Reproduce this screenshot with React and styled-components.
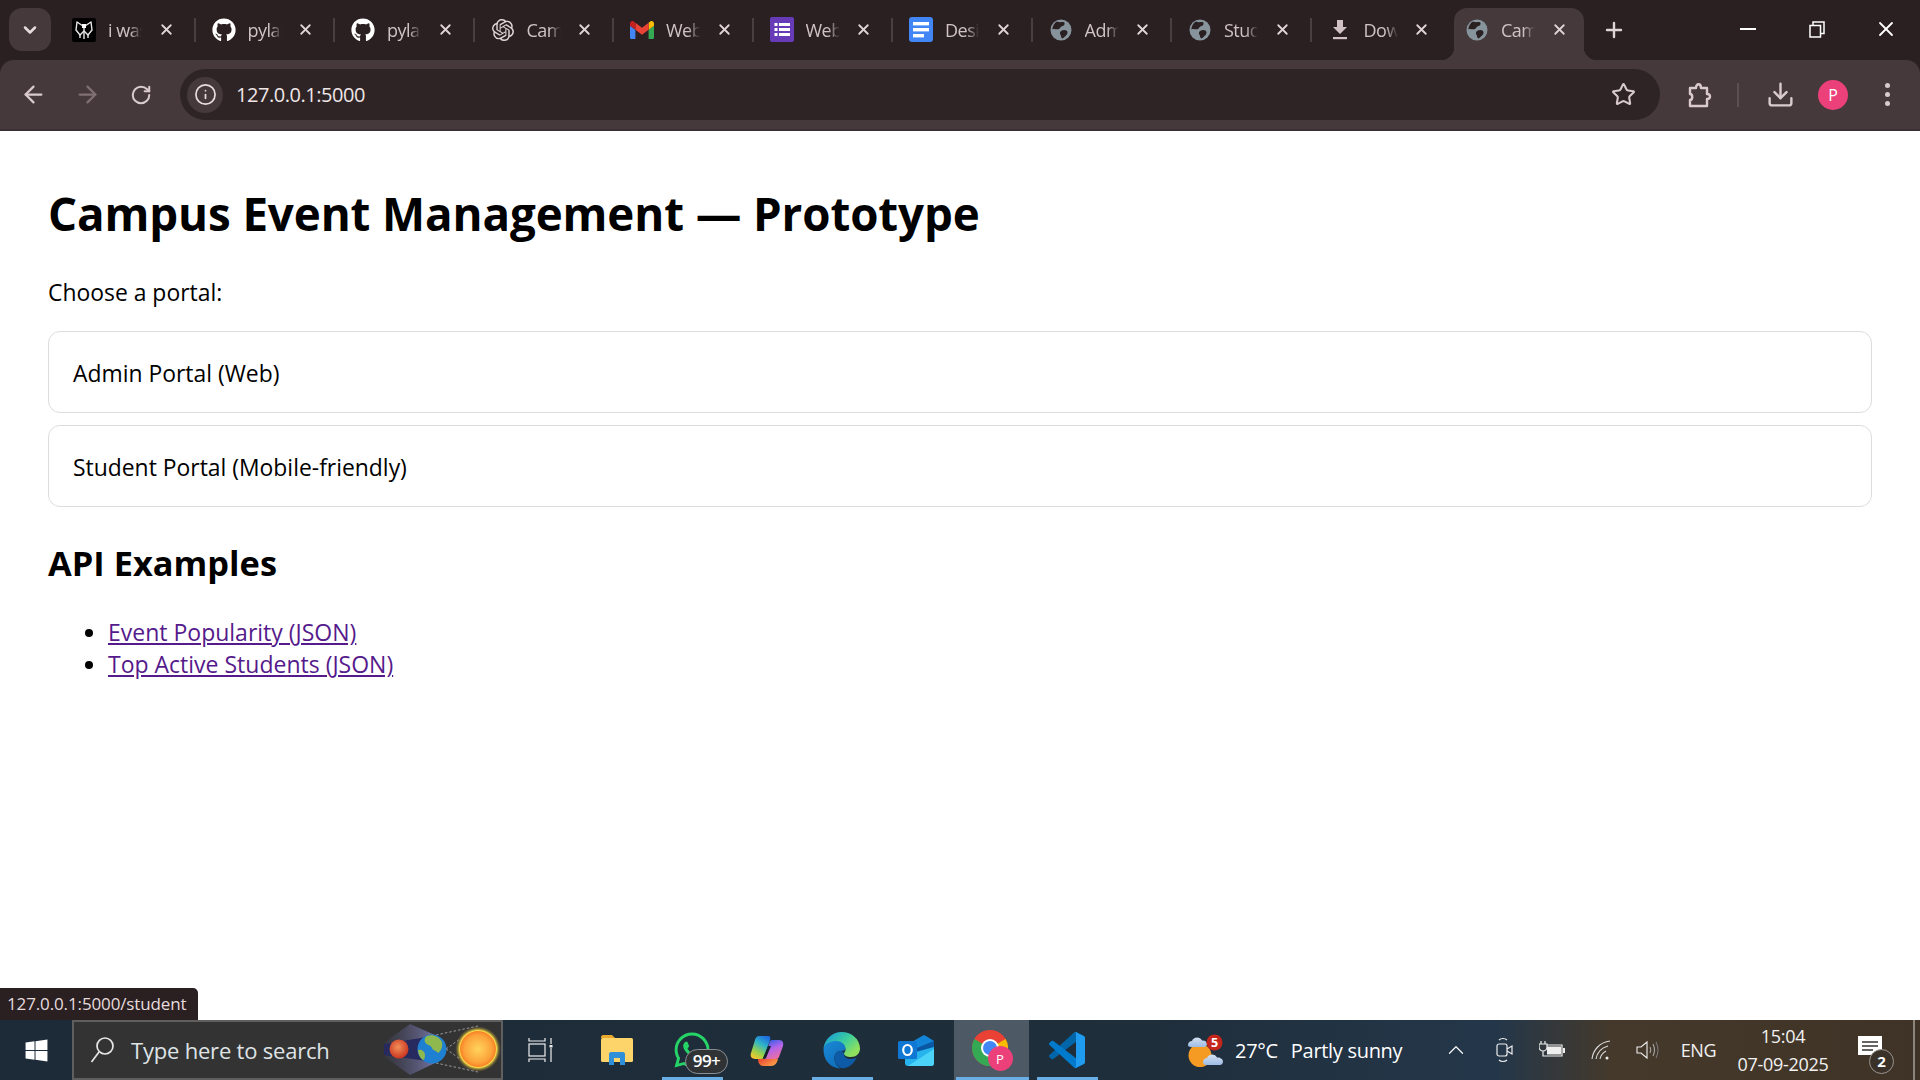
import React from 'react';
import styled, { createGlobalStyle } from 'styled-components';
import { ArrowLeft, ArrowRight, RotateCw, Info, Star, Download, X, Plus, ChevronDown, ChevronUp } from 'lucide-react';
import { FaGithub, FaWindows, FaWhatsapp } from 'react-icons/fa';
import { SiOpenai } from 'react-icons/si';

const FONT = '"Open Sans", "Noto Sans", sans-serif';

const GlobalStyle = createGlobalStyle`
  html, body { margin: 0; padding: 0; background: #fff; }
  body { font-family: ${FONT}; overflow: hidden; }
  #root { height: 100vh; }
`;

const Screen = styled.div`
  width: 1920px;
  height: 1080px;
  display: flex;
  flex-direction: column;
  position: relative;
  overflow: hidden;
`;

/* browser chrome */
const TabStrip = styled.div`
  height: 60px;
  flex: none;
  background: #2a1f21;
  display: flex;
  align-items: flex-start;
  padding-top: 8px;
  box-sizing: border-box;
`;

const TabListButton = styled.div`
  width: 42px;
  height: 43px;
  margin-left: 9px;
  margin-right: 5px;
  flex: none;
  border-radius: 13px;
  background: #46393c;
  color: #e6dcdd;
  display: flex;
  align-items: center;
  justify-content: center;
`;

const Tab = styled.div`
  width: 139.5px;
  height: 52px;
  flex: none;
  margin-left: ${p => (p.$active ? -2 : 0)}px;
  position: relative;
  display: flex;
  align-items: flex-start;
  padding: 9px 0 0 16px;
  box-sizing: border-box;
  color: #d1c3c5;
  &::after {
    content: '';
    display: ${p => (p.$last ? 'none' : 'block')};
    position: absolute;
    right: 0;
    top: 10px;
    width: 2px;
    height: 24px;
    background: #4a3e41;
  }
`;

const ActiveShape = styled.div`
  position: absolute;
  left: 5px;
  right: 5px;
  top: 0;
  bottom: 0;
  background: #46393c;
  border-radius: 13px 13px 0 0;
  &::before, &::after {
    content: '';
    position: absolute;
    bottom: 0;
    width: 13px;
    height: 13px;
  }
  &::before { left: -13px; background: radial-gradient(circle at 0 0, #2a1f21 13px, #46393c 13.5px); }
  &::after { right: -13px; background: radial-gradient(circle at 100% 0, #2a1f21 13px, #46393c 13.5px); }
`;

const TabIcon = styled.div`
  width: 24px;
  height: 25px;
  flex: none;
  position: relative;
  display: flex;
  align-items: center;
  justify-content: center;
`;

const TabTitle = styled.div`
  width: 34px;
  margin-left: 12px;
  flex: none;
  position: relative;
  overflow: hidden;
  white-space: nowrap;
  font-size: 18px;
  line-height: 27px;
  letter-spacing: -0.5px;
  color: #d1c3c5;
  -webkit-mask-image: linear-gradient(90deg, #000 65%, transparent 100%);
  mask-image: linear-gradient(90deg, #000 65%, transparent 100%);
`;

const TabClose = styled.div`
  width: 20px;
  height: 25px;
  margin-left: 14px;
  flex: none;
  position: relative;
  display: flex;
  align-items: center;
  justify-content: center;
  color: #e0d4d6;
`;

const NewTab = styled.div`
  width: 30px;
  height: 44px;
  margin-left: 10px;
  flex: none;
  display: flex;
  align-items: center;
  justify-content: center;
  color: #e0d4d6;
`;

const WindowControls = styled.div`
  margin-left: auto;
  margin-top: -8px;
  display: flex;
  flex: none;
`;

const WindowButton = styled.div`
  width: 69px;
  height: 58px;
  display: flex;
  align-items: center;
  justify-content: center;
  color: #fff;
`;

const ToolbarWrap = styled.div`
  background: #2a1f21;
  flex: none;
`;

const Toolbar = styled.div`
  height: 69px;
  background: #46393c;
  border-radius: 14px 14px 0 0;
  border-bottom: 2px solid #3a2f32;
  display: flex;
  align-items: center;
`;

const NavButton = styled.div`
  width: 54px;
  height: 54px;
  flex: none;
  margin-left: ${p => p.$ml || 0}px;
  display: flex;
  align-items: center;
  justify-content: center;
  color: ${p => p.$dim ? '#7f7073' : '#d9cbcd'};
`;

const Omnibox = styled.div`
  width: 1480px;
  height: 51px;
  margin-left: 12px;
  flex: none;
  background: #2e2325;
  border-radius: 26px;
  display: flex;
  align-items: center;
  padding: 0 7px;
  box-sizing: border-box;
`;

const SiteInfo = styled.div`
  width: 36px;
  height: 36px;
  flex: none;
  border-radius: 50%;
  background: #46393c;
  color: #e6dcdd;
  display: flex;
  align-items: center;
  justify-content: center;
`;

const Url = styled.div`
  margin-left: 13px;
  font-size: 20px;
  letter-spacing: -0.46px;
  color: #eee6e7;
  flex: 1;
`;

const StarButton = styled.div`
  width: 30px;
  margin-right: 15px;
  display: flex;
  justify-content: center;
  color: #d9cbcd;
`;

const ToolbarDivider = styled.div`
  width: 2px;
  height: 24px;
  background: #5c4f52;
  flex: none;
  margin: 0 14px 0 10px;
`;

const Avatar = styled.div`
  width: ${p => p.$size || 30}px;
  height: ${p => p.$size || 30}px;
  flex: none;
  margin-left: ${p => p.$ml || 0}px;
  border-radius: 50%;
  background: #ec407a;
  color: #fff;
  font-size: ${p => p.$fs || 16}px;
  display: flex;
  align-items: center;
  justify-content: center;
`;

const MenuDots = styled.div`
  width: 5px;
  margin-left: 37px;
  flex: none;
  display: flex;
  flex-direction: column;
  gap: 4px;
  span {
    width: 5px;
    height: 5px;
    border-radius: 50%;
    background: #d9cbcd;
  }
`;

/* page */
const Page = styled.main`
  flex: 1;
  min-height: 0;
  background: #fff;
  color: #000;
  padding: 0 48px;
`;

const Title = styled.h1`
  margin: 0;
  padding-top: 49px;
  font-size: 45.7px;
  line-height: 66px;
  font-weight: 700;
  letter-spacing: -0.1px;
`;

const Lead = styled.p`
  margin: 31px 0 0;
  font-size: 22.9px;
  line-height: 32px;
`;

const Card = styled.div`
  height: 82px;
  box-sizing: border-box;
  margin-top: ${p => p.$mt}px;
  padding: 2px 24px 0;
  border: 1px solid #ddd;
  border-radius: 12px;
  display: flex;
  align-items: center;
  font-size: 22.9px;
`;

const Subtitle = styled.h2`
  margin: 34px 0 0;
  font-size: 34.4px;
  line-height: 44px;
  font-weight: 700;
`;

const LinkList = styled.ul`
  margin: 31px 0 0;
  padding: 0 0 0 60px;
  font-size: 23px;
  line-height: 32px;
  a { color: #551a8b; text-decoration: underline; }
`;

const StatusBubble = styled.div`
  position: absolute;
  left: 0;
  bottom: 60px;
  width: 198px;
  height: 32px;
  box-sizing: border-box;
  padding-left: 7px;
  background: #2a1f21;
  border-radius: 0 5px 0 0;
  color: #e6dcdd;
  font-size: 17px;
  letter-spacing: -0.13px;
  line-height: 32px;
  white-space: nowrap;
`;

/* taskbar */
const Taskbar = styled.footer`
  height: 60px;
  flex: none;
  display: flex;
  align-items: stretch;
  color: #fff;
  background: linear-gradient(90deg, #1d2b38 0%, #1f2e3b 60%, #24374a 78%, #45392b 84%, #3f3327 100%);
`;

const StartButton = styled.div`
  width: 72px;
  flex: none;
  display: flex;
  align-items: center;
  justify-content: center;
`;

const SearchBox = styled.div`
  width: 431px;
  flex: none;
  box-sizing: border-box;
  background: #333;
  border: 2px solid #5f5f5f;
  display: flex;
  align-items: center;
  position: relative;
  overflow: hidden;
`;

const SearchGlassWrap = styled.div`
  margin-left: 16px;
  display: flex;
`;

const SearchLabel = styled.span`
  margin-left: 15px;
  font-size: 22px;
  letter-spacing: -0.2px;
  color: #dfe3e6;
`;

const ArtSvg = styled.svg`
  position: absolute;
  right: -3px;
  top: 0;
`;

const TaskSlot = styled.div`
  width: ${p => p.$w || 75}px;
  flex: none;
  position: relative;
  display: flex;
  align-items: center;
  justify-content: center;
  background: ${p => p.$active ? '#4d5a66' : 'transparent'};
  &::after {
    content: '';
    display: ${p => p.$open ? 'block' : 'none'};
    position: absolute;
    left: ${p => p.$active ? 2 : 8}px;
    right: ${p => p.$active ? 0 : 6}px;
    bottom: 0;
    height: 3px;
    background: #6aaee6;
  }
`;

const WaBadge = styled.div`
  position: absolute;
  left: 31px;
  top: 29px;
  width: 43px;
  height: 25px;
  box-sizing: border-box;
  border: 1px solid #8a8f94;
  border-radius: 13px;
  background: #2f3336;
  color: #fff;
  font-size: 17px;
  font-weight: 600;
  line-height: 22px;
  text-align: center;
  letter-spacing: -0.5px;
`;

const Weather = styled.div`
  width: 326px;
  flex: none;
  box-sizing: border-box;
  padding-left: 83px;
  display: flex;
  align-items: center;
  font-size: 20px;
  white-space: nowrap;
  letter-spacing: -0.3px;
  span { margin-left: 12px; }
  span:last-of-type { margin-left: 13px; }
  svg { flex: none; }
`;

const TraySlot = styled.div`
  width: ${p => p.$w}px;
  flex: none;
  position: relative;
  display: flex;
  flex-direction: column;
  align-items: center;
  justify-content: center;
  font-size: 18px;
  letter-spacing: -0.3px;
  color: #f2f2f2;
`;

const ClockLine = styled.div`
  line-height: 28px;
`;

const NotifyBadge = styled.div`
  position: absolute;
  left: 30px;
  top: 29px;
  width: 25px;
  height: 25px;
  box-sizing: border-box;
  border: 1.5px solid #9a958e;
  border-radius: 50%;
  background: #3a3128;
  color: #fff;
  font-size: 15px;
  font-weight: 700;
  line-height: 22px;
  text-align: center;
`;

const DesktopPeek = styled.div`
  width: 2px;
  margin-left: 12px;
  flex: none;
  background: #8c857c;
`;

const ChromeWrap = styled.div`
  position: relative;
  width: 40px;
  height: 40px;
  svg { display: block; }
`;

const AvatarBadge = styled(Avatar)`
  position: absolute;
  right: -1px;
  bottom: -1px;
`;

/* drawn icons */
const MothIcon = () => (
  <svg width="24" height="24" viewBox="0 0 24 24">
    <rect width="24" height="24" rx="2" fill="#000" />
    <g stroke="#e8e8e8" strokeWidth="1.4" fill="none" strokeLinejoin="round">
      <path d="M12 6v15" />
      <path d="M11 8 5 4 4 12l4 5 4-4" />
      <path d="M13 8l6-4 1 8-4 5-4-4" />
      <path d="M8 17v3M16 17v3" />
    </g>
    <rect x="10" y="6" width="4" height="4" fill="#fff" />
  </svg>
);

const GmailIcon = () => (
  <svg width="24" height="20" viewBox="0 0 24 18">
    <path d="M1.6 18h3.8V8.8L0 4.8v11.6C0 17.3.7 18 1.6 18z" fill="#4285f4" />
    <path d="M18.6 18h3.8c.9 0 1.6-.7 1.6-1.6V4.8l-5.4 4z" fill="#34a853" />
    <path d="M18.6 1.8v7L24 4.8V2.4C24 .4 21.7-.7 20.2.5z" fill="#fbbc04" />
    <path d="M5.4 8.8v-7L12 6.7l6.6-4.9v7L12 13.7z" fill="#ea4335" />
    <path d="M0 2.4v2.4l5.4 4v-7L3.8.5C2.3-.7 0 .4 0 2.4z" fill="#c5221f" />
  </svg>
);

const FormsIcon = () => (
  <svg width="24" height="25" viewBox="0 0 24 25">
    <rect width="24" height="25" rx="2" fill="#673ab7" />
    <g fill="#fff">
      <rect x="4.5" y="6" width="3" height="3" />
      <rect x="4.5" y="11" width="3" height="3" />
      <rect x="4.5" y="16" width="3" height="3" />
      <rect x="9" y="6" width="11" height="3" />
      <rect x="9" y="11" width="11" height="3" />
      <rect x="9" y="16" width="11" height="3" />
    </g>
  </svg>
);

const DocsIcon = () => (
  <svg width="24" height="25" viewBox="0 0 24 25">
    <rect width="24" height="25" rx="3" fill="#4285f4" />
    <g fill="#fff">
      <rect x="4" y="5" width="16" height="3.4" />
      <rect x="4" y="11" width="16" height="3.4" />
      <rect x="4" y="17" width="11" height="3.4" />
    </g>
  </svg>
);

const GlobeIcon = () => (
  <svg width="22" height="22" viewBox="0 0 22 22">
    <circle cx="11" cy="11" r="10.5" fill="#87949c" />
    <path d="M7 2.6c2 1 5 .2 7 .6 1.5 1.5 0 3.7-2 4-2 .5-1.500 2.400-3.500 3-2 .5-4.200-.7-6.200.2C2.600 7.300 4.300 4 7 2.600z" fill="#2a1f21" />
    <path d="M11 12c2-1.300 4.500-1.300 6 0 1 1 .5 3.200-1 4.500-1.200 1-2.300 2.600-3.700 2.900-1.500-.8-.8-2.800-2-4-.6-1.200-.4-2.600.7-3.400z" fill="#2a1f21" />
  </svg>
);

const DownloadTabIcon = () => (
  <svg width="16" height="22" viewBox="0 0 16 22">
    <path d="M5 1h6v7h4l-7 7-7-7h4z" fill="#d1c3c5" />
    <rect x="1" y="18" width="14" height="2.200" fill="#d1c3c5" />
  </svg>
);

const PuzzleIcon = () => (
  <svg width="26" height="28" viewBox="0 0 26 28" fill="none" stroke="#d9cbcd" strokeWidth="2.400" strokeLinejoin="round">
    <path d="M3 7h6c0-5 5-5 5 0h6v6c4 0 4 5 0 5v7H3v-6c3 0 3-6 0-6z" />
  </svg>
);

const RestoreIcon = () => (
  <svg width="16" height="17" viewBox="0 0 16 17" fill="none" stroke="#fff" strokeWidth="1.500">
    <rect x="1" y="4.500" width="10.500" height="11.500" />
    <path d="M4 4.500V1h11v11.500h-3.500" />
  </svg>
);

const MinimizeIcon = () => (
  <svg width="16" height="3" viewBox="0 0 16 3"><rect width="16" height="2" fill="#fff" /></svg>
);

const SearchGlass = () => (
  <svg width="26" height="28" viewBox="0 0 26 28" fill="none" stroke="#e6e6e6" strokeWidth="1.700">
    <circle cx="15" cy="10" r="8" />
    <path d="M9 16 1.500 26" />
  </svg>
);

const EclipseArt = () => (
  <ArtSvg width="124" height="56" viewBox="0 0 124 56">
    <defs>
      <radialGradient id="sun" cx="50%" cy="50%" r="50%">
        <stop offset="0%" stopColor="#ffd45e" />
        <stop offset="60%" stopColor="#fca33a" />
        <stop offset="76%" stopColor="#f9852a" />
        <stop offset="80%" stopColor="#fde047" />
        <stop offset="100%" stopColor="#6a5a2c" stopOpacity="0" />
      </radialGradient>
      <radialGradient id="mars" cx="45%" cy="40%" r="60%">
        <stop offset="0%" stopColor="#f2905a" />
        <stop offset="100%" stopColor="#c9341f" />
      </radialGradient>
      <linearGradient id="haze" x1="0" y1="0" x2="1" y2="0">
        <stop offset="0%" stopColor="#4a4a72" stopOpacity="0.2" />
        <stop offset="100%" stopColor="#8080b6" stopOpacity="0.85" />
      </linearGradient>
    </defs>
    <path d="M5 20 30 2 55 13v28L30 53 5 35z" fill="url(#haze)" />
    <path d="M4 22 47 15v24L4 33z" fill="#262a5e" />
    <path d="M56 13 98 4M56 41l42 9M66 27l14-10M66 27l14 10" stroke="#9a9aa2" strokeWidth="1" strokeDasharray="2.500 2" fill="none" />
    <circle cx="19" cy="27" r="9.500" fill="url(#mars)" />
    <circle cx="52" cy="27" r="14.500" fill="#1f7fd0" />
    <path d="M47 14c5-2 12 0 15 6 1 5-1 9-4 11-2-3-5-2-6-5-1-3-6-3-7-6-1-2 0-5 2-6zM38 28c3-1 7 1 7 5 0 3-1 5-2 5-3-2-5-6-5-10z" fill="#8fb84f" />
    <ellipse cx="98" cy="27" rx="23" ry="23" fill="url(#sun)" />
  </ArtSvg>
);

const FolderIcon = () => (
  <svg width="32" height="32" viewBox="0 0 32 32">
    <path d="M0 3c0-1 1-2 2-2h9l3 3h-14z" fill="#e8a92c" />
    <rect y="4" width="32" height="24" rx="1.500" fill="#fcd46a" />
    <path d="M8 31V20c0-1 1-2 2-2h12c1 0 2 1 2 2v11h-5v-7h-6v7z" fill="#2f8fd8" />
  </svg>
);

const CopilotIcon = () => (
  <svg width="34" height="31" viewBox="0 0 34 31">
    <defs>
      <linearGradient id="cpA" x1="0.7" y1="0" x2="0.2" y2="1">
        <stop offset="0%" stopColor="#1f6fe0" />
        <stop offset="35%" stopColor="#2fb5c8" />
        <stop offset="70%" stopColor="#9ad04a" />
        <stop offset="100%" stopColor="#fbc62e" />
      </linearGradient>
      <linearGradient id="cpB" x1="0.3" y1="0" x2="0.7" y2="1">
        <stop offset="0%" stopColor="#3a5fe8" />
        <stop offset="45%" stopColor="#b565ea" />
        <stop offset="100%" stopColor="#f0709a" />
      </linearGradient>
      <linearGradient id="cpC" x1="0" y1="0" x2="1" y2="0.6">
        <stop offset="0%" stopColor="#e8402f" />
        <stop offset="100%" stopColor="#fba04a" />
      </linearGradient>
    </defs>
    <path d="M9 1h8c3 0 4 1 3 4l-6 17c-.5 1-1 2-3 2H5c-4 0-5-3-4-6L5 5c1-3 2-4 4-4z" fill="url(#cpA)" />
    <path d="M20 6c1-1 2-1 3-1h6c3 0 5 2 4 6l-4 11c-.5 1-1 2-3 2h-9c-2 0-3-1-2-3z" fill="url(#cpB)" />
    <path d="M8 24h20c-1 4-3 7-7 7h-8c-3 0-5-3-5-7z" fill="url(#cpC)" />
    <path d="M18 11 13 23h3l5-12z" fill="#14202c" />
  </svg>
);

const EdgeIcon = () => (
  <svg width="37" height="37" viewBox="0 0 37 37">
    <defs>
      <linearGradient id="edA" x1="0.1" y1="0.1" x2="0.9" y2="0.7">
        <stop offset="0%" stopColor="#1a9fd6" />
        <stop offset="55%" stopColor="#3fcf9a" />
        <stop offset="100%" stopColor="#8fe05e" />
      </linearGradient>
      <linearGradient id="edB" x1="0" y1="0" x2="0.7" y2="1">
        <stop offset="0%" stopColor="#1a8ad8" />
        <stop offset="100%" stopColor="#0f6cb8" />
      </linearGradient>
    </defs>
    <path d="M18.500 0C29 0 37 7.500 37 16.500c0 5-4 8.500-9 8.500-4 0-7-1.500-7-3.500 0-1 1.500-1.500 1.500-4 0-4-4-7-9-7C7 10.500 2 13 .5 16 2 7 9 0 18.500 0z" fill="url(#edA)" />
    <path d="M.5 16C2.500 11 8 9 13 9c5 0 9.500 3 9.500 8 0 1-2 2-5 2-4 0-7 4-6 9 .5 3 2.500 6 6 8.500C7 36 0 28 .5 16z" fill="url(#edB)" />
    <path d="M11.500 28c-1-5 2-9 6-9 1.500 0 3.500 1 3.500 3 0 3 3 5 7 5 3 0 5-1 6-2-3 7-9 12-16 11-3.500-2-5.500-5-6.500-8z" fill="#0d5aa6" />
  </svg>
);

const OutlookIcon = () => (
  <svg width="37" height="31" viewBox="0 0 37 31">
    <path d="M7 11 24 1c1-1 3-1 4 0l8 5v10H7z" fill="#1285d8" />
    <path d="M11 16 36 6v6L15 23z" fill="#0a58a4" />
    <path d="M7 20 36 12v16c0 2-1 3-3 3H10c-2 0-3-1-3-3z" fill="#27b4ee" />
    <path d="M10 31 36 14v14c0 2-1 3-3 3z" fill="#4bd4f8" />
    <rect y="6" width="19" height="18" rx="1.500" fill="#0f78d4" />
    <ellipse cx="9.500" cy="15" rx="4.300" ry="5" fill="none" stroke="#fff" strokeWidth="2.200" />
  </svg>
);

const ChromeIcon = () => (
  <ChromeWrap>
    <svg width="36" height="36" viewBox="0 0 36 36">
      <circle cx="18" cy="18" r="18" fill="#e94235" />
      <path d="M18 18 33.600 9a18 18 0 0 1-9.600 26z" fill="#fbbc04" />
      <path d="M18 18 24 35A18 18 0 0 1 2.400 9z" fill="#34a853" />
      <circle cx="18" cy="18" r="9" fill="#fff" />
      <circle cx="18" cy="18" r="7" fill="#4285f4" />
    </svg>
    <AvatarBadge $size={25} $fs={13}>P</AvatarBadge>
  </ChromeWrap>
);

const VsCodeIcon = () => (
  <svg width="36" height="36" viewBox="0 0 100 100">
    <path fill="#0065A9" d="M96.500 10.800 75.900.9a6.200 6.200 0 0 0-7.100 1.200L1.400 63.600a4.200 4.200 0 0 0 0 6.200l5.500 5a4.200 4.200 0 0 0 5.300.2L93.400 13.400c2.700-2 6.600-.1 6.600 3.300v-.2c0-2.400-1.400-4.600-3.500-5.700z" />
    <path fill="#007ACC" d="M96.500 89.200 75.900 99.100a6.200 6.200 0 0 1-7.100-1.200L1.400 36.400a4.200 4.200 0 0 1 0-6.200l5.500-5a4.200 4.200 0 0 1 5.300-.2L93.400 86.600c2.700 2 6.600.1 6.600-3.300v.2c0 2.400-1.400 4.600-3.500 5.700z" />
    <path fill="#1F9CF0" d="M75.900 99.100a6.200 6.200 0 0 1-7.100-1.200c2.300 2.300 6.200.7 6.200-2.600V4.700c0-3.300-3.900-4.900-6.200-2.600a6.200 6.200 0 0 1 7.100-1.200l20.600 9.900c2.100 1 3.500 3.200 3.500 5.600v67.200c0 2.400-1.400 4.600-3.500 5.600z" />
  </svg>
);

const WeatherIcon = () => (
  <svg width="36" height="33" viewBox="0 0 36 33">
    <defs>
      <linearGradient id="cloud" x1="0" y1="0" x2="0" y2="1">
        <stop offset="0%" stopColor="#d5e0f0" />
        <stop offset="100%" stopColor="#9dbce6" />
      </linearGradient>
    </defs>
    <circle cx="13" cy="21.500" r="11.500" fill="#f59b23" />
    <path d="M1 11c0-2.500 2-4 4-4 1-4 8-5 10-.5 3-.5 5 1.500 5 3.500 0 2-1.500 3-3 3H4c-2 0-3-1-3-2z" fill="url(#cloud)" />
    <path d="M16 28c0-2.500 2-4 4-4 1-4 8-5 10-.5 3-.5 6 1.500 6 4 0 2-1.500 3.500-3 3.500H19c-2 0-3-1.500-3-3z" fill="url(#cloud)" />
    <circle cx="27.500" cy="8.500" r="8" fill="#c4261d" />
    <text x="27.500" y="13" textAnchor="middle" fontSize="12.500" fontWeight="700" fill="#fff" fontFamily={FONT}>5</text>
  </svg>
);

const MeetIcon = () => (
  <svg width="18" height="28" viewBox="0 0 18 28" fill="none" stroke="#eee" strokeWidth="1.200">
    <path d="M3 4c2-2 6-2 8 0M3 24c2 2 6 2 8 0" />
    <rect x="1" y="8" width="10" height="12" rx="2" />
    <path d="M11 13l5-3v8l-5-3" />
  </svg>
);

const BatteryIcon = () => (
  <svg width="26" height="18" viewBox="0 0 26 18">
    <path d="M2 0v3M6 0v3M0 3h8v3a4 4 0 0 1-8 0zM4 10v5h2" stroke="#eee" strokeWidth="1.200" fill="none" />
    <path d="M8 4h15v11H6" stroke="#eee" strokeWidth="1.200" fill="none" />
    <rect x="8" y="5.500" width="14" height="8" fill="#eee" />
    <rect x="24" y="7" width="2" height="5" fill="#eee" />
  </svg>
);

const WifiIcon = () => (
  <svg width="20" height="20" viewBox="0 0 20 20" fill="none" stroke="#ddd" strokeWidth="1.100">
    <path d="M1 19C2 10 9 2 19 1M5 19c1-6 5-11 12-13M9 19c.5-3 2.500-6 6-8" />
    <circle cx="16" cy="18" r="1.500" fill="#eee" stroke="none" />
  </svg>
);

const VolumeIcon = () => (
  <svg width="24" height="20" viewBox="0 0 24 20" fill="none" stroke="#eee" strokeWidth="1.100">
    <path d="M1 7v6h4l6 5V2L5 7z" />
    <path d="M14 7c1 2 1 4 0 6M17 4c2 4 2 8 0 12" stroke="#aaa" />
    <path d="M20 2c2.500 5 2.500 11 0 16" stroke="#777" />
  </svg>
);

const NotifyIcon = () => (
  <svg width="24" height="28" viewBox="0 0 24 28">
    <path d="M0 0h24v19h-6l-4 6v-6H0z" fill="#fff" />
    <path d="M4 6h16M4 10h16M4 14h11" stroke="#333" strokeWidth="1.400" />
  </svg>
);

const TaskViewIcon = () => (
  <svg width="26" height="26" viewBox="0 0 26 26" fill="none" stroke="#eee" strokeWidth="1.200">
    <path d="M1 1v3h16V1M1 25v-3h16v3" />
    <rect x="1" y="7" width="16" height="12" />
    <path d="M23 1v6M23 11v14" />
    <rect x="21.500" y="8" width="3" height="2.500" fill="#eee" stroke="none" />
  </svg>
);

const tabs = [
  { icon: <MothIcon />, title: 'i was' },
  { icon: <FaGithub size={24} color="#fff" />, title: 'pylance' },
  { icon: <FaGithub size={24} color="#fff" />, title: 'pylance' },
  { icon: <SiOpenai size={22} color="#e0d4d6" />, title: 'Campus' },
  { icon: <GmailIcon />, title: 'Webknot' },
  { icon: <FormsIcon />, title: 'Webknot' },
  { icon: <DocsIcon />, title: 'Design' },
  { icon: <GlobeIcon />, title: 'Admin' },
  { icon: <GlobeIcon />, title: 'Student' },
  { icon: <DownloadTabIcon />, title: 'Downloads' },
  { icon: <GlobeIcon />, title: 'Campus', active: true },
];

const taskApps = [
  { key: 'files', icon: <FolderIcon /> },
  { key: 'whatsapp', icon: <FaWhatsapp size={40} color="#25d366" />, open: true, badge: '99+' },
  { key: 'copilot', icon: <CopilotIcon /> },
  { key: 'edge', icon: <EdgeIcon />, open: true },
  { key: 'outlook', icon: <OutlookIcon /> },
  { key: 'chrome', icon: <ChromeIcon />, open: true, active: true },
  { key: 'vscode', icon: <VsCodeIcon />, open: true },
];

const App = () => {
  return (
    <Screen>
      <GlobalStyle />
      <TabStrip>
        <TabListButton><ChevronDown size={20} strokeWidth={3} /></TabListButton>
        {tabs.map((tab, i) => (
          <Tab key={i} $active={tab.active} $last={tab.active || i === tabs.length - 2}>
            {tab.active && <ActiveShape />}
            <TabIcon>{tab.icon}</TabIcon>
            <TabTitle>{tab.title}</TabTitle>
            <TabClose><X size={17} strokeWidth={2.6} /></TabClose>
          </Tab>
        ))}
        <NewTab><Plus size={24} strokeWidth={2.4} /></NewTab>
        <WindowControls>
          <WindowButton><MinimizeIcon /></WindowButton>
          <WindowButton><RestoreIcon /></WindowButton>
          <WindowButton><X size={24} strokeWidth={1.8} /></WindowButton>
        </WindowControls>
      </TabStrip>
      <ToolbarWrap>
        <Toolbar>
          <NavButton $ml={6}><ArrowLeft size={27} strokeWidth={2} /></NavButton>
          <NavButton $dim><ArrowRight size={27} strokeWidth={2} /></NavButton>
          <NavButton><RotateCw size={22} strokeWidth={2.2} /></NavButton>
          <Omnibox>
            <SiteInfo><Info size={23} strokeWidth={1.8} /></SiteInfo>
            <Url>127.0.0.1:5000</Url>
            <StarButton><Star size={25} strokeWidth={2} /></StarButton>
          </Omnibox>
          <NavButton $ml={13}><PuzzleIcon /></NavButton>
          <ToolbarDivider />
          <NavButton><Download size={29} strokeWidth={2} /></NavButton>
          <Avatar $ml={11}>P</Avatar>
          <MenuDots><span /><span /><span /></MenuDots>
        </Toolbar>
      </ToolbarWrap>
      <Page>
        <Title>Campus Event Management — Prototype</Title>
        <Lead>Choose a portal:</Lead>
        <Card $mt={22}>Admin Portal (Web)</Card>
        <Card $mt={12}>Student Portal (Mobile-friendly)</Card>
        <Subtitle>API Examples</Subtitle>
        <LinkList>
          <li><a href="#popularity">Event Popularity (JSON)</a></li>
          <li><a href="#students">Top Active Students (JSON)</a></li>
        </LinkList>
      </Page>
      <StatusBubble>127.0.0.1:5000/student</StatusBubble>
      <Taskbar>
        <StartButton><FaWindows size={25} color="#fff" /></StartButton>
        <SearchBox>
          <SearchGlassWrap><SearchGlass /></SearchGlassWrap>
          <SearchLabel>Type here to search</SearchLabel>
          <EclipseArt />
        </SearchBox>
        <TaskSlot $w={76}><TaskViewIcon /></TaskSlot>
        {taskApps.map(app => (
          <TaskSlot key={app.key} $open={app.open} $active={app.active}>
            {app.icon}
            {app.badge && <WaBadge>{app.badge}</WaBadge>}
          </TaskSlot>
        ))}
        <Weather>
          <WeatherIcon />
          <span>27°C</span>
          <span>Partly sunny</span>
        </Weather>
        <TraySlot $w={52}><ChevronUp size={26} strokeWidth={1.2} /></TraySlot>
        <TraySlot $w={46}><MeetIcon /></TraySlot>
        <TraySlot $w={48}><BatteryIcon /></TraySlot>
        <TraySlot $w={50}><WifiIcon /></TraySlot>
        <TraySlot $w={44}><VolumeIcon /></TraySlot>
        <TraySlot $w={57}>ENG</TraySlot>
        <TraySlot $w={112}>
          <ClockLine>15:04</ClockLine>
          <ClockLine>07-09-2025</ClockLine>
        </TraySlot>
        <TraySlot $w={62}>
          <NotifyIcon />
          <NotifyBadge>2</NotifyBadge>
        </TraySlot>
        <DesktopPeek />
      </Taskbar>
    </Screen>
  );
};

export default App;
